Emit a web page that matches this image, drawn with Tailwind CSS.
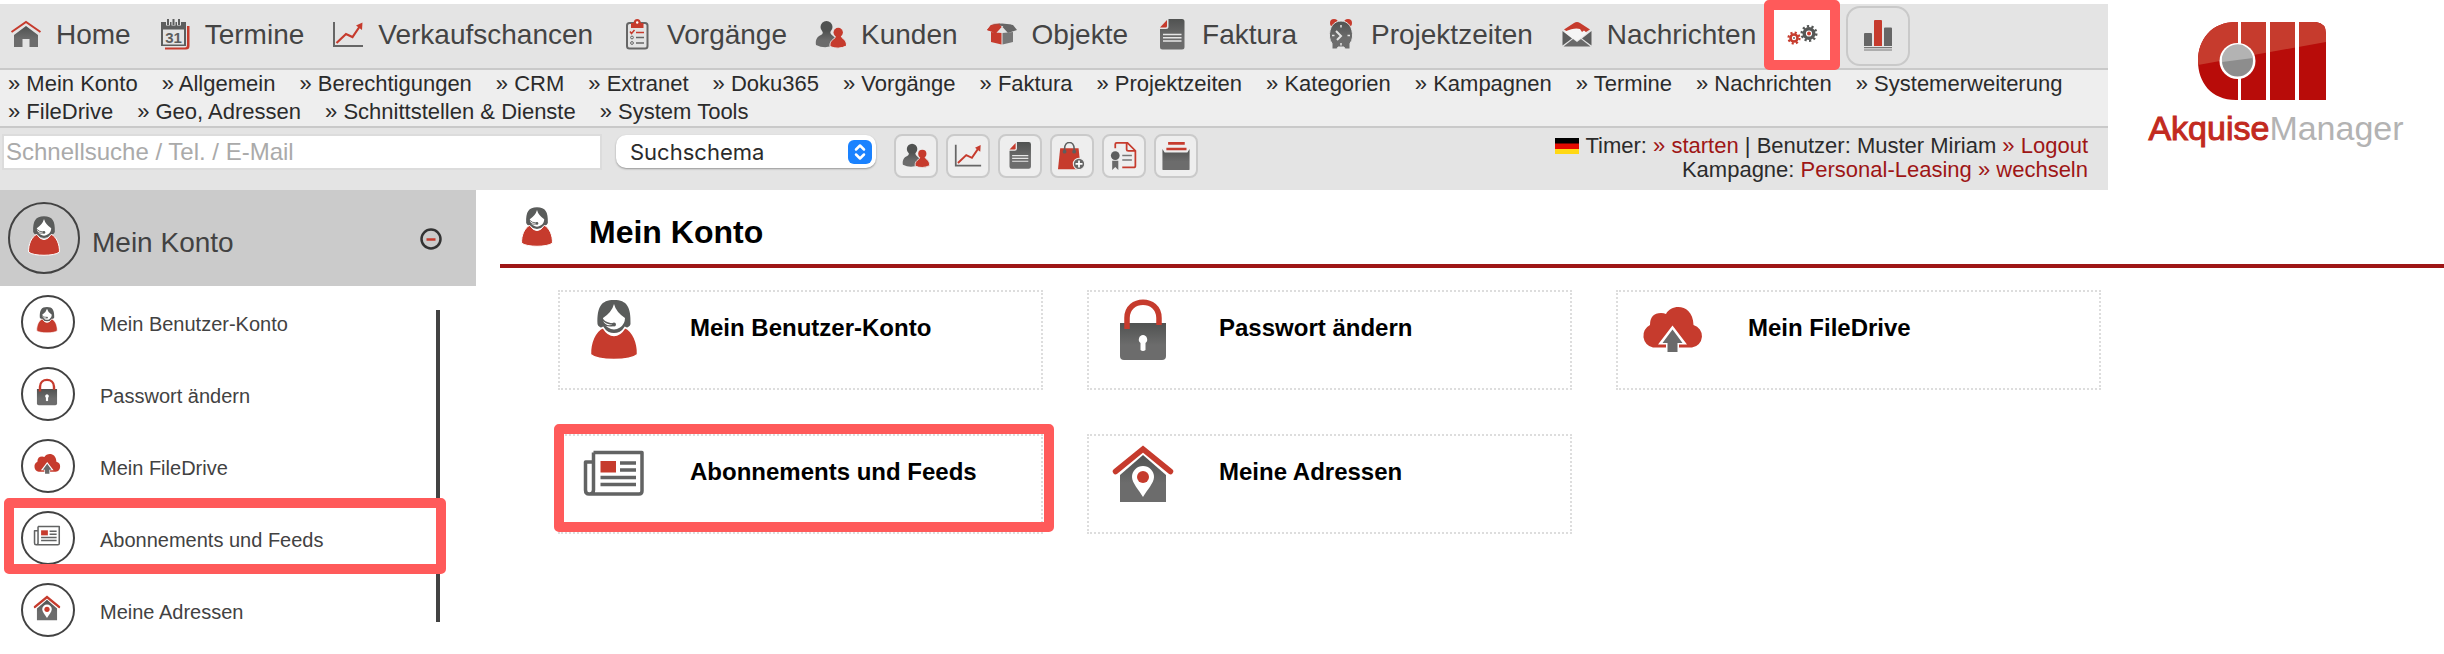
<!DOCTYPE html>
<html lang="de">
<head>
<meta charset="utf-8">
<title>AkquiseManager – Mein Konto</title>
<script src="https://cdn.jsdelivr.net/npm/@tailwindcss/browser@4"></script>
</head>
<body class="bg-white font-['Liberation_Sans',Arial,sans-serif] text-[#2b2b2b]">

<svg class="absolute size-0" aria-hidden="true">
  <defs>
    <linearGradient id="grey" x1="0" y1="0" x2="0" y2="1"><stop offset="0" stop-color="#505251"/><stop offset="0.6" stop-color="#6c6c6c"/></linearGradient>
    <symbol id="person" viewBox="0 0 64 64">
      <path fill="#5a5c5b" d="M15.500 26C15 9 19 2 32 2S49 9 48.500 26Q48 29 43 30Q38 35 32 35T21 30Q16 29 15.500 26Z"/>
      <path fill="#fff" d="M32 6Q34 14 43 20Q43 26 38 29.500Q32 33.500 26 29.500Q21 26 21 20Q30 14 32 6Z"/>
      <path fill="none" stroke="#5a5c5b" stroke-width="1.300" d="M20 21Q24 26 32 26M21 25Q25 29 31 27.500"/>
      <circle cx="32" cy="26.500" r="2" fill="#5a5c5b"/>
      <path fill="#c63b2d" stroke="#fff" stroke-width="1.500" d="M21 29.500Q26 37.500 32 37.500T43 29.500C51 33 56 45 55.500 56.500C48 63 16 63 8.500 56.500C8 45 13 33 21 29.500Z"/>
    </symbol>
    <symbol id="lock" viewBox="0 0 64 64">
      <path fill="url(#grey)" d="M9 25H55V58Q55 62 51 62H13Q9 62 9 58Z"/>
      <path fill="none" stroke="#c63b2d" stroke-width="5.500" d="M16 31V20C16 -1 48 -1 48 20V27"/>
      <path fill="#fff" d="M32 37a4.500 4.500 0 0 1 2.500 8V52Q32 54 29.500 52V45A4.500 4.500 0 0 1 32 37Z"/>
    </symbol>
    <symbol id="cloud" viewBox="0 0 64 64">
      <path fill="#c63b2d" d="M13 49.500A12 12 0 0 1 10 27Q10 15 21 15Q24 15 26 16C32 5 53 6 53.500 27A11.500 11.500 0 0 1 52 49.500Z"/>
      <path fill="#fff" d="M32.500 27.500L47 46.500H39V56H26V46.500H18Z"/>
      <path fill="#6a6a6a" d="M32.500 31.500L42.500 45H37.500V54H27.500V45H22.500Z"/>
    </symbol>
    <symbol id="news" viewBox="0 0 64 64">
      <path fill="none" stroke="#626363" stroke-width="3.500" stroke-linejoin="round" d="M11.500 10.500H60V49Q60 52 57 52H7Q3.500 52 3.500 48V20H11M11.500 10.500V48Q11.500 52 7.500 52"/>
      <path fill="#c63b2d" d="M18.500 19H34V30.500H18.500Z"/>
      <path fill="none" stroke="#626363" stroke-width="3.500" d="M38 21H54M38 28H54M18.500 35.500H54M18.500 42.500H54"/>
    </symbol>
    <symbol id="address" viewBox="0 0 64 64">
      <path fill="url(#grey)" d="M32 13L55 33V60H9V33Z"/>
      <path fill="none" stroke="#c63b2d" stroke-width="5.500" stroke-linecap="round" d="M4.500 29.500L32 7L59.500 29.500"/>
      <path fill="#fff" d="M32 24A11 11 0 0 1 43 35C43 41 36 48 32 55C28 48 21 41 21 35A11 11 0 0 1 32 24Z"/>
      <circle cx="32" cy="35" r="6" fill="#c63b2d"/>
    </symbol>
    <symbol id="home" viewBox="0 0 32 32">
      <path fill="url(#grey)" d="M16 7L28 16V28H19.500V20H12.500V28H4V16Z"/>
      <path fill="none" stroke="#c63b2d" stroke-width="2" d="M1.500 13L16 3L30.500 13"/>
    </symbol>
    <symbol id="calendar" viewBox="0 0 32 32">
      <path fill="#c63b2d" d="M28 7H30.500V27Q30.500 30.500 27 30.500H6V28.500H26Q28 28.500 28 26Z"/>
      <path fill="#5d5e5e" d="M2 3H27V27H2Z"/>
      <path fill="#e4e4e4" d="M4 10.500H25V25.500H4Z"/>
      <path stroke="#e4e4e4" stroke-width="4" d="M9 0V6.500M14.500 0V6.500M20 0V6.500"/>
      <path stroke="#5d5e5e" stroke-width="2" d="M9 0V6M14.500 0V6M20 0V6"/>
      <text x="14.500" y="23.500" text-anchor="middle" font-family="Liberation Sans" font-weight="bold" font-size="15" fill="#5d5e5e">31</text>
    </symbol>
    <symbol id="chart" viewBox="0 0 32 32">
      <path fill="none" stroke="#666" stroke-width="2" d="M2 3V27H31"/>
      <path fill="none" stroke="#c63b2d" stroke-width="2.200" d="M4.500 24L14 15L20.500 18L28 7"/>
      <path fill="#c63b2d" d="M30.500 3.500L30 11L24 6.500Z"/>
    </symbol>
    <symbol id="clipboard" viewBox="0 0 32 32">
      <rect x="6" y="4" width="20.500" height="25.500" rx="2.500" fill="none" stroke="#666" stroke-width="2"/>
      <path fill="#c63b2d" d="M10 9V4H12.500Q13 0 16.200 0T20 4H22.500V9Z"/>
      <circle cx="16.200" cy="3.500" r="1.200" fill="#fff"/>
      <path fill="none" stroke="#c63b2d" stroke-width="1.500" d="M9 12.500L10.500 14.500L13.500 11M15 13.500H23"/>
      <path fill="none" stroke="#666" stroke-width="1.500" d="M15 18.500H23M15 24H23"/>
      <circle cx="11" cy="18.500" r="1.400" fill="none" stroke="#666"/><circle cx="11" cy="24" r="1.400" fill="none" stroke="#666"/>
    </symbol>
    <symbol id="people" viewBox="0 0 32 32">
      <circle cx="11.500" cy="8" r="6" fill="#505251"/>
      <path fill="url(#grey)" d="M8 12H15Q15 15 18 17C22 20 22 22 22 25Q11 31 1 26C0 20 3 17 6 16Q8 15 8 12Z"/>
      <g fill="#c63b2d"><path stroke="#e8e8e8" d="M20.500 16H26Q26 18.500 28.500 20C31 21.500 31.500 24 31.500 27Q23 31 15 27.500C14.500 23 17 21 18.500 20.200Q20.500 19 20.500 16Z"/><circle cx="23.200" cy="13.500" r="4.700"/></g>
    </symbol>
    <symbol id="box" viewBox="0 0 32 32">
      <path fill="#c63b2d" d="M5 13L15.500 14V25.500L5 23ZM1 11L5 6L13 5L15.500 8L10 14ZM6 5L14 4.500L15.500 6Z"/>
      <path fill="#666" d="M16.500 8L19 5L27 6L31 11L22 14ZM6 5.500L16 4.500L26 5.500L16 7Z"/>
      <path fill="#c63b2d" d="M5 6L13 5L15.500 8L10 14L1 11Z"/>
      <path fill="#777" d="M16.500 14L27 13V23L16.500 25.500Z"/>
    </symbol>
    <symbol id="doc" viewBox="0 0 32 32">
      <path fill="url(#grey)" d="M12.500 0H26Q28.500 0 28.500 2.500V28Q28.500 30.500 26 30.500H6.500Q4 30.500 4 28V10H10Q12.500 10 12.500 7.500Z"/>
      <path fill="#c63b2d" d="M11 1V7Q11 8.500 9.500 8.500H4Z"/>
      <path stroke="#e6e6e6" stroke-width="1.400" d="M7 15.500H25.500M7 18.700H25.500M7 22H25.500"/>
    </symbol>
    <symbol id="alarm" viewBox="0 0 32 32">
      <circle cx="9" cy="4" r="4" fill="#c63b2d"/><circle cx="23" cy="4" r="4" fill="#c63b2d"/>
      <path fill="url(#grey)" stroke="#e4e4e4" stroke-width="1" d="M16 2C23 2 28 8 27.500 18Q27 22 25 24.500V30H20L19 28H13L12 30H7V24.500Q5 22 4.500 18C4 8 9 2 16 2Z"/>
      <path fill="none" stroke="#e4e4e4" stroke-width="2" d="M11 12L16 17L12 21"/>
      <path stroke="#e4e4e4" stroke-width="1.500" d="M16 6V8.500M7 16.500H9.500M22.500 16.500H25M16 24V26.500"/>
    </symbol>
    <symbol id="mail" viewBox="0 0 32 32">
      <path fill="#c63b2d" d="M3 10.500L13 4Q16 2 19 4L29 10.500L25 13H7Z"/>
      <path fill="#f5f5f5" d="M4 12.500Q14 8 19 10L21 13L23 11.500L26 14L16 22L3 14Z"/>
      <path fill="#5c5d5d" d="M1.500 12L11 19.500L1.500 26.500ZM30.500 12L21 19.500L30.500 26.500Z"/>
      <path fill="#6a6a6a" d="M2.500 27.500L12 20L16 23L20 20L29.500 27.500Z"/>
    </symbol>
    <symbol id="gears" viewBox="0 0 32 32">
      <circle cx="8" cy="20" r="3.500" fill="none" stroke="#c63b2d" stroke-width="2.600"/>
      <circle cx="8" cy="20" r="5.500" fill="none" stroke="#c63b2d" stroke-width="2.200" stroke-dasharray="2.100 2.220"/>
      <circle cx="8" cy="20" r="1" fill="#666"/>
      <circle cx="23" cy="15.500" r="4.800" fill="none" stroke="#555756" stroke-width="3.400"/>
      <circle cx="23" cy="15.500" r="7.200" fill="none" stroke="#555756" stroke-width="2.600" stroke-dasharray="2.200 2.320"/>
      <circle cx="23" cy="15.500" r="2" fill="#c63b2d"/>
    </symbol>
    <symbol id="bars" viewBox="0 0 32 32">
      <path fill="#666" d="M2 14Q2 13 3 13H9Q10 13 10 14V26H2ZM22 8.500Q22 7.500 23 7.500H29Q30 7.500 30 8.500V26H22Z"/>
      <path fill="#c63b2d" d="M12 1Q12 0 13 0H19Q20 0 20 1V26H12Z"/>
      <path stroke="#777" stroke-width="1.200" d="M2 27.700H30M2 30H30"/>
    </symbol>
    <symbol id="bag" viewBox="0 0 32 32">
      <path fill="#c63b2d" d="M2.500 7H23.500L26 31H0Z"/>
      <path fill="none" stroke="#5d5e5e" stroke-width="1.800" d="M7.500 11V8C7.500 -2 18.500 -2 18.500 8V11"/>
      <circle cx="7.500" cy="11" r="2.200" fill="#5d5e5e"/><circle cx="18.500" cy="11" r="2.200" fill="#5d5e5e"/>
      <circle cx="24" cy="25" r="6.500" fill="#666" stroke="#eee" stroke-width="1.200"/>
      <path stroke="#fff" stroke-width="2" d="M24 21V29M20 25H28"/>
    </symbol>
    <symbol id="cert" viewBox="0 0 32 32">
      <path fill="none" stroke="#c63b2d" stroke-width="2" d="M6 7V2.500Q6 1 7.500 1H20L29 10V27Q29 29 27 29H14M19 1V8.500Q19 10 21 10H29"/>
      <circle cx="6" cy="15.500" r="5" fill="#5d5e5e"/>
      <path fill="#6a6a6a" d="M2.500 21.500H9.500V32L6 28.500L2.500 32Z"/>
      <path stroke="#777" stroke-width="1.800" d="M14 15.500H25M14 20.500H25"/>
    </symbol>
    <symbol id="archive" viewBox="0 0 32 32">
      <path fill="#c63b2d" d="M7 0H26V3H7ZM5 6.500H28V9.500H5Z"/>
      <path fill="url(#grey)" d="M.500 8L3 12H29L31.500 8V31Q31.500 32 30.500 32H1.500Q.500 32 .500 31Z"/>
    </symbol>
  </defs>
</svg>

<header class="flex">
  <div class="min-w-0 flex-1 pt-1">
    <nav class="flex h-16 items-center bg-[#e4e4e4] pl-[10px] text-[28px] leading-8 text-[#444]" aria-label="Hauptmenü">
      <div class="flex items-center gap-7 pb-[2px]">
        <a href="#" class="flex items-center gap-[14px]"><svg class="size-8"><use href="#home"/></svg>Home</a>
        <a href="#" class="flex items-center gap-[14px]"><svg class="size-8"><use href="#calendar"/></svg>Termine</a>
        <a href="#" class="flex items-center gap-[14px]"><svg class="size-8"><use href="#chart"/></svg>Verkaufschancen</a>
        <a href="#" class="flex items-center gap-[14px]"><svg class="size-8"><use href="#clipboard"/></svg>Vorgänge</a>
        <a href="#" class="flex items-center gap-[14px]"><svg class="size-8"><use href="#people"/></svg>Kunden</a>
        <a href="#" class="flex items-center gap-[14px]"><svg class="size-8"><use href="#box"/></svg>Objekte</a>
        <a href="#" class="flex items-center gap-[14px]"><svg class="size-8"><use href="#doc"/></svg>Faktura</a>
        <a href="#" class="flex items-center gap-[14px]"><svg class="size-8"><use href="#alarm"/></svg>Projektzeiten</a>
        <a href="#" class="flex items-center gap-[14px]"><svg class="size-8"><use href="#mail"/></svg>Nachrichten</a>
      </div>
      <button class="relative ml-[14px] flex h-[60px] w-16 items-center justify-center rounded-[14px] bg-white pb-1" aria-label="Einstellungen">
        <svg class="size-8"><use href="#gears"/></svg>
        <span class="absolute -inset-x-[6px] -top-[6px] -bottom-1 z-10 rounded-[5px] border-[10px] border-[#ff5a5a]"></span>
      </button>
      <button class="ml-3 flex h-[60px] w-16 items-center justify-center rounded-[14px] border-2 border-[#c9c9c9]" aria-label="Auswertungen">
        <svg class="size-8"><use href="#bars"/></svg>
      </button>
    </nav>
    <nav class="flex flex-wrap gap-x-6 border-y-2 border-[#c9c9c9] bg-[#eee] pl-2 text-[22px] leading-7" aria-label="Untermenü">
      <a href="#">» Mein Konto</a><a href="#">» Allgemein</a><a href="#">» Berechtigungen</a><a href="#">» CRM</a><a href="#">» Extranet</a><a href="#">» Doku365</a><a href="#">» Vorgänge</a><a href="#">» Faktura</a><a href="#">» Projektzeiten</a><a href="#">» Kategorien</a><a href="#">» Kampagnen</a><a href="#">» Termine</a><a href="#">» Nachrichten</a><a href="#">» Systemerweiterung</a><a href="#">» FileDrive</a><a href="#">» Geo, Adressen</a><a href="#">» Schnittstellen &amp; Dienste</a><a href="#">» System Tools</a>
    </nav>
    <div class="flex h-[62px] items-start bg-[#e4e4e4] pt-[6px] pr-5 pl-[2px]">
      <input type="text" aria-label="Schnellsuche" placeholder="Schnellsuche / Tel. / E-Mail" class="h-9 w-[600px] border-2 border-[#dcdcdc] bg-white px-[2px] text-2xl leading-8 outline-none placeholder:text-[#aaa]">
      <div class="relative ml-[14px]">
        <select aria-label="Suchschema" class="mt-px h-[33px] w-[260px] appearance-none rounded-[10px] bg-white pl-[14px] font-[Inter,sans-serif] text-[22px] leading-8 shadow-[0_1px_2px_rgba(0,0,0,0.35)]"><option>Suchschema</option></select>
        <svg class="pointer-events-none absolute top-[6px] right-1 size-6" viewBox="0 0 24 24"><rect width="24" height="24" rx="6" fill="#1a82ff"/><path fill="none" stroke="#fff" stroke-width="2.500" stroke-linecap="round" stroke-linejoin="round" d="M8 9.500L12 5.500L16 9.500M8 14.500L12 18.500L16 14.500"/></svg>
      </div>
      <div class="ml-[18px] flex gap-2">
        <button class="flex size-11 items-center justify-center rounded-lg border-2 border-[#cacaca] bg-[#eee]" aria-label="Kunden"><svg class="size-7"><use href="#people"/></svg></button>
        <button class="flex size-11 items-center justify-center rounded-lg border-2 border-[#cacaca] bg-[#eee]" aria-label="Verkaufschancen"><svg class="size-7"><use href="#chart"/></svg></button>
        <button class="flex size-11 items-center justify-center rounded-lg border-2 border-[#cacaca] bg-[#eee]" aria-label="Faktura"><svg class="size-7"><use href="#doc"/></svg></button>
        <button class="flex size-11 items-center justify-center rounded-lg border-2 border-[#cacaca] bg-[#eee]" aria-label="Bestellung"><svg class="size-7"><use href="#bag"/></svg></button>
        <button class="flex size-11 items-center justify-center rounded-lg border-2 border-[#cacaca] bg-[#eee]" aria-label="Vertrag"><svg class="size-7"><use href="#cert"/></svg></button>
        <button class="flex size-11 items-center justify-center rounded-lg border-2 border-[#cacaca] bg-[#eee]" aria-label="Archiv"><svg class="size-7"><use href="#archive"/></svg></button>
      </div>
      <div class="ml-auto text-right text-[22px] leading-6">
        <div class="flex items-center justify-end gap-[6px]"><svg class="h-4 w-6" viewBox="0 0 24 16"><path d="M0 0H24V6H0Z"/><path fill="#e30a00" d="M0 5.500H24V11H0Z"/><path fill="#ffd814" d="M0 11H24V16H0Z"/></svg><p>Timer: <a href="#" class="text-[#9e1616]">» starten</a> | Benutzer: Muster Miriam <a href="#" class="text-[#9e1616]">» Logout</a></p></div>
        <p>Kampagne: <a href="#" class="text-[#9e1616]">Personal-Leasing</a> <a href="#" class="text-[#9e1616]">» wechseln</a></p>
      </div>
    </div>
  </div>
  <a href="#" class="flex w-[336px] shrink-0 flex-col items-center gap-2 pt-[22px]">
    <svg class="mr-7 h-[78px] w-32" viewBox="0 0 128 78" aria-hidden="true">
      <defs><clipPath id="emblem"><path d="M40 0V78H38C13 78 0 60 0 39S13 0 38 0ZM43 0H68V78H43ZM72 0H97V78H72ZM101 0H118Q128 1 128 12V78H101Z"/></clipPath></defs>
      <g clip-path="url(#emblem)"><path fill="#b80c09" d="M0 0H128V78H0Z"/><path fill="#c63b2d" d="M0 0H128V20L0 43Z"/></g>
      <circle cx="39.500" cy="39" r="18" fill="#fff"/>
      <circle cx="39.500" cy="39" r="15.500" fill="#8d8d8d"/><path fill="#b3b3b3" d="M24 40A15.500 15.500 0 1 1 55 36Z"/>
    </svg>
    <span class="text-[34px] leading-10 text-[#b3b3b3]"><span class="text-[#c22a20] [-webkit-text-stroke:1px_#c22a20]">Akquise</span>Manager</span>
  </a>
</header>

<div class="flex">
  <aside class="w-[476px] shrink-0">
    <div class="flex h-24 items-center bg-[#cbcbcb] pr-[34px] pl-2">
      <span class="flex size-[72px] items-center justify-center rounded-full border-2 border-[#424242] pb-1"><svg class="size-[42px]"><use href="#person"/></svg></span>
      <h2 class="ml-3 pt-[10px] text-[28px] leading-8 text-[#424242]">Mein Konto</h2>
      <button class="ml-auto pt-[2px]" aria-label="Einklappen"><svg class="size-[22px]" viewBox="0 0 22 22"><circle cx="11" cy="11" r="9.500" fill="none" stroke="#333" stroke-width="2.500"/><path stroke="#c63b2d" stroke-width="2.500" d="M6.500 11.500H15.500"/></svg></button>
    </div>
    <div class="flex">
      <ul class="flex-1 text-xl leading-6 text-[#424242]">
        <li><a href="#" class="flex h-[72px] items-center gap-[25px] pl-[21px]"><span class="flex size-[54px] items-center justify-center rounded-full border-2 border-[#424242] pr-[2px] pb-1"><svg class="size-7"><use href="#person"/></svg></span><span class="pt-1">Mein Benutzer-Konto</span></a></li>
        <li><a href="#" class="flex h-[72px] items-center gap-[25px] pl-[21px]"><span class="flex size-[54px] items-center justify-center rounded-full border-2 border-[#424242] pr-[2px] pb-1"><svg class="size-7"><use href="#lock"/></svg></span><span class="pt-1">Passwort ändern</span></a></li>
        <li><a href="#" class="flex h-[72px] items-center gap-[25px] pl-[21px]"><span class="flex size-[54px] items-center justify-center rounded-full border-2 border-[#424242] pr-[2px] pb-1"><svg class="size-7"><use href="#cloud"/></svg></span><span class="pt-1">Mein FileDrive</span></a></li>
        <li class="relative"><a href="#" class="flex h-[72px] items-center gap-[25px] pl-[21px]"><span class="flex size-[54px] items-center justify-center rounded-full border-2 border-[#424242] pr-[2px] pb-1"><svg class="size-7"><use href="#news"/></svg></span><span class="pt-1">Abonnements und Feeds</span></a>
          <span class="pointer-events-none absolute -top-1 -right-[10px] bottom-0 left-1 z-10 rounded-[5px] border-[10px] border-[#ff5a5a]"></span></li>
        <li><a href="#" class="flex h-[72px] items-center gap-[25px] pl-[21px]"><span class="flex size-[54px] items-center justify-center rounded-full border-2 border-[#424242] pr-[2px] pb-1"><svg class="size-7"><use href="#address"/></svg></span><span class="pt-1">Meine Adressen</span></a></li>
      </ul>
      <div class="my-6 mr-9 w-1 bg-[#424242]"></div>
    </div>
  </aside>

  <main class="ml-6 min-w-0 flex-1 text-black">
    <div class="flex h-[78px] items-center gap-[31px] border-b-4 border-[#9e1616] pl-4">
      <svg class="size-[42px]"><use href="#person"/></svg>
      <h1 class="pt-[10px] text-[32px] leading-10 font-bold">Mein Konto</h1>
    </div>
    <div class="grid grid-cols-3 gap-11 pt-[22px] pr-[343px] pl-[58px] text-2xl leading-7 font-bold">
      <a href="#" class="flex h-[100px] gap-11 border-2 border-dotted border-[#ddd] pt-[6px] pl-[22px]"><svg class="size-16 shrink-0"><use href="#person"/></svg><span class="pt-4">Mein Benutzer-Konto</span></a>
      <a href="#" class="flex h-[100px] gap-11 border-2 border-dotted border-[#ddd] pt-[6px] pl-[22px]"><svg class="size-16 shrink-0"><use href="#lock"/></svg><span class="pt-4">Passwort ändern</span></a>
      <a href="#" class="flex h-[100px] gap-11 border-2 border-dotted border-[#ddd] pt-[6px] pl-[22px]"><svg class="size-16 shrink-0"><use href="#cloud"/></svg><span class="pt-4">Mein FileDrive</span></a>
      <a href="#" class="relative flex h-[100px] gap-11 border-2 border-dotted border-[#ddd] pt-[6px] pl-[22px]"><svg class="size-16 shrink-0"><use href="#news"/></svg><span class="pt-4">Abonnements und Feeds</span>
        <span class="pointer-events-none absolute -top-3 -right-[13px] bottom-0 -left-[6px] rounded-[5px] border-[10px] border-[#ff5a5a]"></span></a>
      <a href="#" class="flex h-[100px] gap-11 border-2 border-dotted border-[#ddd] pt-[6px] pl-[22px]"><svg class="size-16 shrink-0"><use href="#address"/></svg><span class="pt-4">Meine Adressen</span></a>
    </div>
  </main>
</div>
</body>
</html>
